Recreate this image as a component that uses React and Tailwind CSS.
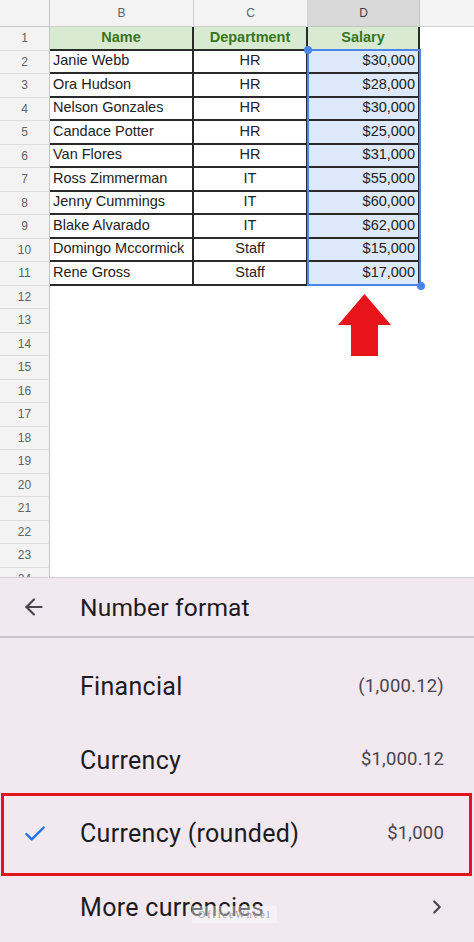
import { ArrowLeft, Check, ChevronRight } from 'lucide-react'

const people = [
  ['Janie Webb', 'HR', '$30,000'],
  ['Ora Hudson', 'HR', '$28,000'],
  ['Nelson Gonzales', 'HR', '$30,000'],
  ['Candace Potter', 'HR', '$25,000'],
  ['Van Flores', 'HR', '$31,000'],
  ['Ross Zimmerman', 'IT', '$55,000'],
  ['Jenny Cummings', 'IT', '$60,000'],
  ['Blake Alvarado', 'IT', '$62,000'],
  ['Domingo Mccormick', 'Staff', '$15,000'],
  ['Rene Gross', 'Staff', '$17,000'],
]

const emptyRows = Array.from({ length: 13 }, (_, i) => i + 12)

const formats = [
  { label: 'Financial', sample: '(1,000.12)' },
  { label: 'Currency', sample: '$1,000.12' },
  { label: 'Currency (rounded)', sample: '$1,000', checked: true },
  { label: 'More currencies', more: true },
]

function RowNum({ n }) {
  return (
    <div className="w-[50px] shrink-0 flex items-center justify-center bg-[#f3f3f3] border-r border-b border-r-[#c4c4c4] border-b-[#dcdcdc] text-[12px] text-[#5f6368]">
      {n}
    </div>
  )
}

export default function App() {
  return (
    <div className="w-[474px] h-[942px] overflow-hidden bg-white flex flex-col">
      {/* Sheet grid */}
      <div className="relative h-[577px] shrink-0 overflow-hidden font-['Liberation_Sans',Arial,sans-serif] text-[#222]">
        {/* Column headers */}
        <div className="flex h-[27px]">
          <div className="w-[50px] shrink-0 bg-[#f3f3f3] border-r border-b border-[#c4c4c4]" />
          <div className="w-[144px] shrink-0 flex items-center justify-center bg-[#f3f3f3] border-r border-b border-[#d0d0d0] text-[12px] text-[#5f6368]">B</div>
          <div className="w-[114px] shrink-0 flex items-center justify-center bg-[#f3f3f3] border-r border-b border-[#d0d0d0] text-[12px] text-[#5f6368]">C</div>
          <div className="w-[112px] shrink-0 flex items-center justify-center bg-[#d9d9d9] border-r border-b border-[#c4c4c4] text-[12px] text-[#3c4043]">D</div>
          <div className="flex-1 bg-[#f3f3f3] border-b border-[#d0d0d0]" />
        </div>

        {/* Row 1: titles */}
        <div className="flex h-[23.5px]">
          <RowNum n={1} />
          <div className="w-[144px] shrink-0 flex items-center justify-center bg-[#d9ead3] border-r-2 border-b-2 border-[#2a2a2a] text-[14.5px] font-bold text-[#38761d]">Name</div>
          <div className="w-[114px] shrink-0 flex items-center justify-center bg-[#d9ead3] border-r-2 border-b-2 border-[#2a2a2a] text-[14.5px] font-bold text-[#38761d]">Department</div>
          <div className="w-[112px] shrink-0 flex items-center justify-center bg-[#d9ead3] border-r-2 border-b-2 border-[#2a2a2a] text-[14.5px] font-bold text-[#38761d]">Salary</div>
          <div className="flex-1" />
        </div>

        {people.map(([name, dept, salary], i) => (
          <div key={name} className="flex h-[23.5px]">
            <RowNum n={i + 2} />
            <div className="w-[144px] shrink-0 flex items-center pl-[3px] border-r-2 border-b-2 border-[#2a2a2a] text-[14.5px] whitespace-nowrap">{name}</div>
            <div className="w-[114px] shrink-0 flex items-center justify-center border-r-2 border-b-2 border-[#2a2a2a] text-[14.5px]">{dept}</div>
            <div className="w-[112px] shrink-0 flex items-center justify-end pr-[3px] bg-[#dde8fa] border-r-2 border-b-2 border-[#2a2a2a] text-[14.5px]">{salary}</div>
            <div className="flex-1" />
          </div>
        ))}

        {emptyRows.map((n) => (
          <div key={n} className="flex h-[23.5px]">
            <RowNum n={n} />
            <div className="flex-1" />
          </div>
        ))}

        {/* Selection outline D2:D11 */}
        <div className="absolute left-[307px] top-[49px] w-[114px] h-[237px] border-2 border-[#4a86e8] pointer-events-none" />
        <div className="absolute left-[304px] top-[46px] w-[8px] h-[8px] rounded-full bg-[#4a86e8]" />
        <div className="absolute left-[417px] top-[282px] w-[8px] h-[8px] rounded-full bg-[#4a86e8]" />

        {/* Red annotation arrow */}
        <svg className="absolute left-[338px] top-[294px]" width="54" height="62" viewBox="0 0 54 62">
          <polygon points="26.5,0 53,31 40,31 40,62 13,62 13,31 0,31" fill="#e8141c" />
        </svg>
      </div>

      {/* Bottom sheet */}
      <div className="relative flex-1 bg-[#f1e8f0] border-t border-[#d8ced8] font-['Roboto',Arial,sans-serif]">
        <div className="flex items-center h-[60px] border-b-2 border-[#cbc3cb]">
          <div className="w-[80px] shrink-0 flex items-center pl-[21px] text-[#49454f]">
            <ArrowLeft size={26} strokeWidth={2} />
          </div>
          <span className="pt-[3px] text-[24.5px] tracking-[0.2px] text-[#1d1b20]">Number format</span>
        </div>

        <div className="pt-[12px]">
          {formats.map((f) => (
            <div key={f.label} className="relative flex items-center h-[73.5px] pr-[30px]">
              <div className="w-[80px] shrink-0 flex items-center pl-[22px] text-[#1a73e8]">
                {f.checked && <Check size={26} strokeWidth={2.2} />}
              </div>
              <span className="flex-1 text-[25px] tracking-[0.3px] text-[#1d1b20]">{f.label}</span>
              {f.sample && <span className="text-[18.5px] tracking-[0.2px] text-[#49454f]">{f.sample}</span>}
              {f.more && <ChevronRight size={22} strokeWidth={2.4} className="text-[#49454f] -mr-[4px]" />}
              {f.checked && (
                <div className="absolute left-[1px] right-[2px] -top-[4px] -bottom-[5px] border-[3px] border-[#e3141b] pointer-events-none" />
              )}
            </div>
          ))}
        </div>

        {/* Watermark */}
        <div className="absolute left-[192px] top-[328px] px-[6px] py-[1px] bg-white/40 text-[10px] tracking-[2px] text-[#9a9a9a] font-['Liberation_Serif',serif]">
          OfficeWheel
        </div>
      </div>
    </div>
  )
}
